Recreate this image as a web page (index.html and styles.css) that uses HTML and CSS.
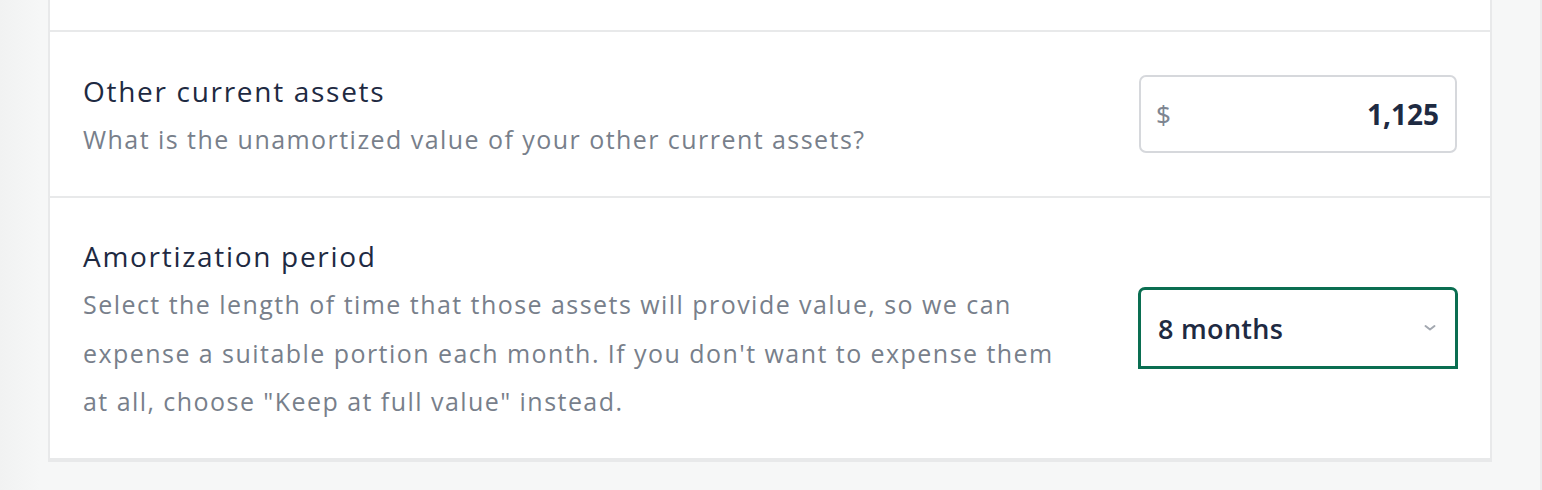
FILE: index.html
```html
<!DOCTYPE html>
<html lang="en">
<head>
<meta charset="utf-8">
<title>Assets</title>
<link rel="stylesheet" href="styles.css">
</head>
<body>
<div class="page">
  <div class="card">
    <div class="row row-top"></div>
    <div class="row row-assets">
      <div class="text">
        <div class="title">Other current assets</div>
        <div class="desc">What is the unamortized value of your other current assets?</div>
      </div>
      <div class="money">
        <span class="currency">$</span>
        <span class="amount">1,125</span>
      </div>
    </div>
    <div class="row row-period">
      <div class="text">
        <div class="title">Amortization period</div>
        <div class="desc">Select the length of time that those assets will provide value, so we can expense a suitable portion each month. If you don't want to expense them at all, choose "Keep at full value" instead.</div>
      </div>
      <div class="select">
        <span class="select-value">8 months</span>
        <svg class="chevron" width="12" height="8" viewBox="0 0 12 8"><path d="M1.5 2 L6 5.5 L10.5 2" fill="none" stroke="#a3a8b0" stroke-width="2" stroke-linecap="round" stroke-linejoin="round"/></svg>
      </div>
    </div>
  </div>
  <div class="scroll-edge"></div>
</div>
</body>
</html>
```
FILE: styles.css
```css
html, body {
  margin: 0;
  padding: 0;
}
body {
  background: #f6f7f7;
  font-family: "Open Sans", "Noto Sans", sans-serif;
  width: 1542px;
  height: 490px;
  overflow: hidden;
}
.page {
  display: flex;
  height: 490px;
  background: linear-gradient(to right, #f1f2f2 0px, #f6f7f7 40px);
}
.card {
  margin-left: 48px;
  width: 1440px;
  align-self: flex-start;
  background: #ffffff;
  border-left: 2px solid #e8e9ea;
  border-right: 2px solid #e8e9ea;
  border-bottom: 4px solid #e8e9ea;
}
.scroll-edge {
  margin-left: auto;
  width: 2px;
  background: #ebecec;
}
.row {
  display: flex;
  align-items: center;
  padding: 0 33px 0 33px;
  border-top: 2px solid #e8e9ea;
}
.row-top {
  height: 30px;
  border-top: none;
}
.row-assets {
  height: 164px;
}
.row-period {
  height: 260px;
}
.text {
  flex: 1;
  margin-right: 76px;
  padding-top: 2px;
}
.title {
  font-size: 28px;
  line-height: 48px;
  color: #1e2a42;
  font-weight: 500;
  letter-spacing: 1.7px;
}
.desc {
  font-size: 25px;
  line-height: 48.5px;
  color: #787f8b;
  letter-spacing: 1.45px;
}
.money {
  box-sizing: border-box;
  width: 318px;
  height: 78px;
  border: 2px solid #d6d8dc;
  border-radius: 7px;
  display: flex;
  align-items: center;
  justify-content: space-between;
  padding: 0 16px 0 15px;
}
.currency {
  font-family: "Noto Sans", sans-serif;
  font-size: 26px;
  color: #7e8591;
}
.amount {
  font-weight: 700;
  font-size: 28px;
  color: #1e2a42;
}
.select {
  box-sizing: border-box;
  width: 320px;
  height: 82px;
  margin-right: -1px;
  border: 3px solid #0a6e51;
  border-radius: 7px 7px 0 0;
  display: flex;
  align-items: center;
  justify-content: space-between;
  padding: 0 19px 0 17px;
}
.select-value {
  font-size: 27px;
  font-weight: 600;
  letter-spacing: 0.3px;
  color: #1e2a42;
}
.chevron {
  display: block;
}
```
